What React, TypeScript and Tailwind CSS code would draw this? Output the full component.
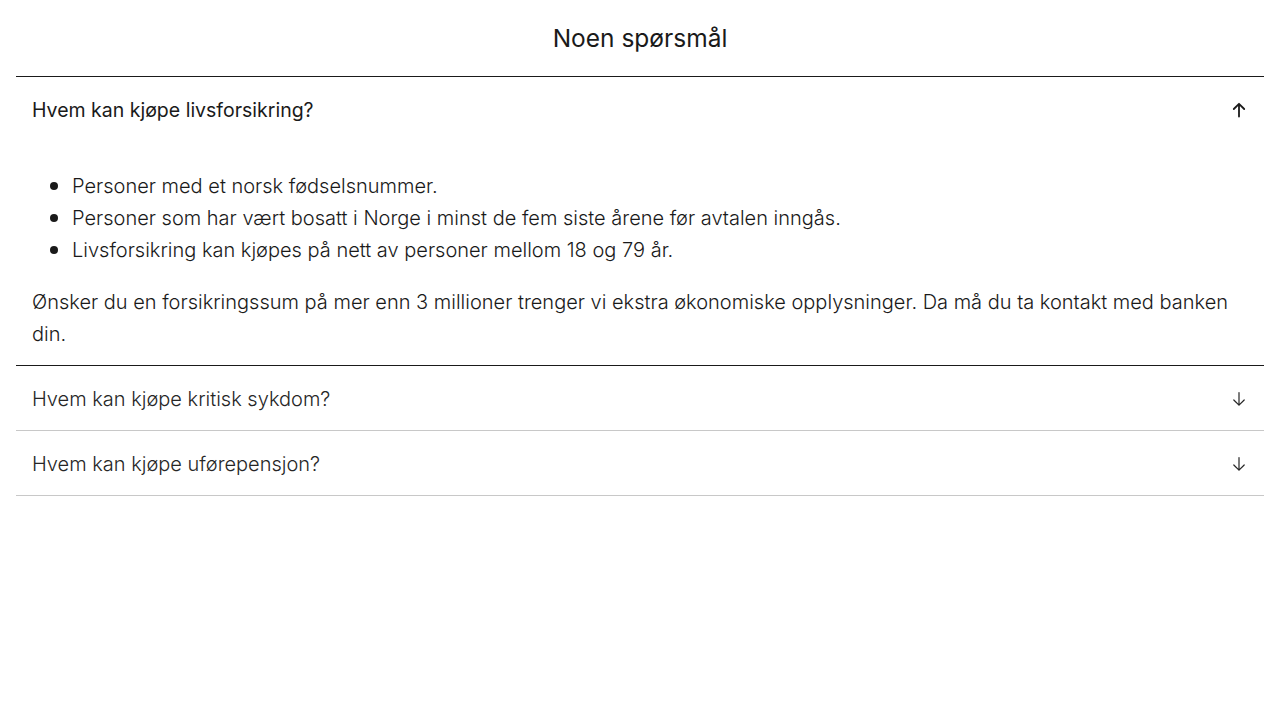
import { useState } from "react";

interface FaqItem {
  question: string;
  answer?: React.ReactNode;
}

const bullets = [
  "Personer med et norsk fødselsnummer.",
  "Personer som har vært bosatt i Norge i minst de fem siste årene før avtalen inngås.",
  "Livsforsikring kan kjøpes på nett av personer mellom 18 og 79 år.",
];

const items: FaqItem[] = [
  {
    question: "Hvem kan kjøpe livsforsikring?",
    answer: (
      <>
        <ul className="pl-[18px]">
          {bullets.map((b) => (
            <li key={b} className="flex items-center gap-[14px]">
              <span className="h-2 w-2 shrink-0 rounded-full bg-[#1a1a1a]" />
              <span>{b}</span>
            </li>
          ))}
        </ul>
        <p className="mt-5">
          Ønsker du en forsikringssum på mer enn 3 millioner trenger vi ekstra økonomiske
          opplysninger. Da må du ta kontakt med banken din.
        </p>
      </>
    ),
  },
  { question: "Hvem kan kjøpe kritisk sykdom?" },
  { question: "Hvem kan kjøpe uførepensjon?" },
];

function Arrow({ up }: { up: boolean }) {
  return (
    <svg
      width="14"
      height="16"
      viewBox="0 0 14 16"
      fill="none"
      stroke="currentColor"
      strokeWidth={up ? 1.8 : 1.2}
      strokeLinecap="round"
      strokeLinejoin="round"
      className={up ? "" : "rotate-180"}
    >
      <path d="M7 14.5V1.8M1.8 7L7 1.8 12.2 7" />
    </svg>
  );
}

export default function App() {
  const [open, setOpen] = useState(0);

  return (
    <div
      className="min-h-screen bg-white px-4 text-[#1a1a1a]"
      style={{ fontFamily: "Inter, 'Noto Sans', sans-serif" }}
    >
      <h2 className="pt-[22px] pb-[22px] text-center text-[24.5px] leading-[32px] font-normal">
        Noen spørsmål
      </h2>
      <div>
        {items.map((item, i) => {
          const isOpen = open === i;
          return (
            <div
              key={item.question}
              className={isOpen ? "border-y border-[#1a1a1a]" : "border-b border-[#c8c8c8]"}
            >
              <button
                type="button"
                onClick={() => setOpen(isOpen ? -1 : i)}
                className={`flex w-full items-center justify-between px-4 leading-8 text-left ${
                  isOpen
                    ? "py-[17px] text-[19.5px] font-normal text-[#1a1a1a]"
                    : "pt-[17px] pb-[15px] text-[20px] font-light text-[#262626]"
                }`}
              >
                <span>{item.question}</span>
                <span className="mr-px flex w-4 justify-center">
                  <Arrow up={isOpen} />
                </span>
              </button>
              {isOpen && item.answer ? (
                <div className="px-4 pt-[27px] pb-[15px] text-[20px] leading-8 font-light">
                  {item.answer}
                </div>
              ) : null}
            </div>
          );
        })}
      </div>
    </div>
  );
}
